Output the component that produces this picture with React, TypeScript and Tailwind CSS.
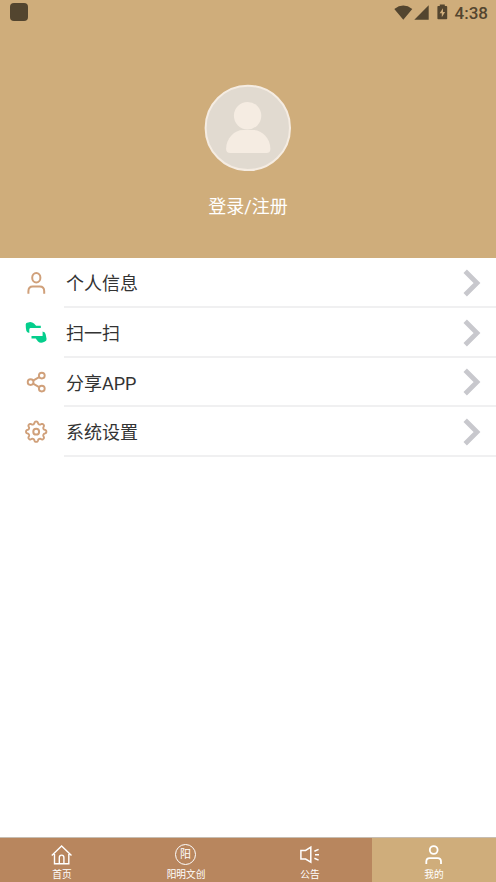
import React from "react";

const TAN = "#d0a07a";

function gearPath(cx: number, cy: number) {
  const pts: string[] = [];
  for (let i = 0; i < 160; i++) {
    const a = (i / 160) * Math.PI * 2;
    const r = 9.0 + 1.25 * Math.tanh(1.6 * Math.cos(8 * a));
    pts.push(`${(cx + r * Math.sin(a)).toFixed(2)} ${(cy - r * Math.cos(a)).toFixed(2)}`);
  }
  return `M${pts.join("L")}Z`;
}

function ProfileIcon() {
  return (
    <svg width="24" height="24" viewBox="0 0 24 24" fill="none" stroke={TAN} strokeWidth="2">
      <ellipse cx="12.3" cy="6.7" rx="4.1" ry="4.8" />
      <path d="M4.4 22.8v-2.6c0-3 1.8-4.6 4.4-4.6h7c2.6 0 4.4 1.6 4.4 4.6v2.6" />
    </svg>
  );
}

function ScanIcon() {
  return (
    <svg width="24" height="24" viewBox="0 0 24 24" fill="#04ce8c">
      <path d="M1.7 3.6Q1.7 1.4 4.2 1.4Q7.6.4 10 2.6L12.1 4.8H16.8V7.1H6.4Q5.3 7.3 5.3 8.6V12Q2.9 11.5 2.4 10Q1.7 7.5 1.7 3.6Z" />
      <path d="M18.6 10.4Q21.5 11 21.7 13.4L22.6 18Q22.7 20.2 20.5 20.7Q16.5 22.8 14 20.4L11.7 17.4H7.5V15.1H18.6Z" />
    </svg>
  );
}

function ShareIcon() {
  return (
    <svg width="24" height="24" viewBox="0 0 24 24" fill="none" stroke={TAN} strokeWidth="1.9">
      <circle cx="6.6" cy="12.1" r="2.9" />
      <circle cx="17.8" cy="5.6" r="2.9" />
      <circle cx="17.8" cy="18.6" r="2.9" />
      <path d="m9.1 10.6 6-3.5M9.1 13.7l6 3.4" />
    </svg>
  );
}

function GearIcon() {
  return (
    <svg width="24" height="24" viewBox="0 0 24 24" fill="none" stroke={TAN} strokeWidth="1.9" strokeLinejoin="round">
      <path d={gearPath(12.2, 11.7)} />
      <circle cx="12.2" cy="11.7" r="2.9" strokeWidth="2" />
    </svg>
  );
}

function HomeIcon() {
  return (
    <svg width="24" height="24" viewBox="0 0 24 24" fill="none" stroke="white" strokeWidth="1.4">
      <path d="M1.8 12.6 11.6 3 21.5 12.6M4.5 11v9.7h14.3V11M9.3 20.5v-6c0-3.2 4.6-3.2 4.6 0v6" />
    </svg>
  );
}

function CultureIcon() {
  return (
    <div className="-ml-px -mt-px flex h-[21px] w-[21px] items-center justify-center rounded-full border border-white text-[11px] leading-none">
      阳
    </div>
  );
}

function NoticeIcon() {
  return (
    <svg width="24" height="24" viewBox="0 0 24 24" fill="none" stroke="white" strokeWidth="1.5">
      <path d="M12.8 4.2v15L7.6 16.1H2.9V7.4h4.7zM16.4 8.3l4.2-1.9M17 11.8h4M16.4 15.2l4.2 1.9" />
    </svg>
  );
}

function MineIcon() {
  return (
    <svg width="24" height="24" viewBox="0 0 24 24" fill="none" stroke="white" strokeWidth="1.8">
      <circle cx="11.7" cy="7" r="3.9" />
      <path d="M4.3 21v-2.4c0-2.3 1.3-3.5 3.4-3.5h7.9c2.1 0 3.4 1.2 3.4 3.5V21" />
    </svg>
  );
}

function StatusBar() {
  return (
    <div className="flex h-[25px] items-center justify-between pl-[9.5px] pr-2 text-[#53452f]">
      <div className="mb-px h-[18px] w-[18px] rounded-[4px] bg-[#53452f]" />
      <div className="flex items-center">
        <svg className="mr-[7px]" width="54" height="18" viewBox="0 0 54 18" fill="currentColor">
          <path d="M0.3 5Q9.3-1.8 18.3 5L9.3 15.7ZM20.3 15.7 34.7 1.3V15.7Z" />
          <path fillRule="evenodd" d="M45.8 1.9V.4h5v1.5h1.6q.8 0 .8.8v11.7q0 .8-.8.8h-8.2q-.8 0-.8-.8V2.7q0-.8.8-.8ZM49 4.2 45.6 9.3h2.2v3.9l3.3-5.2H49Z" />
        </svg>
        <span className="pt-px text-[17px] leading-[24px] font-medium">4:38</span>
      </div>
    </div>
  );
}

const rows = [
  { label: "个人信息", Icon: ProfileIcon },
  { label: "扫一扫", Icon: ScanIcon },
  { label: "分享APP", Icon: ShareIcon },
  { label: "系统设置", Icon: GearIcon },
];

const tabs = [
  { label: "首页", Icon: HomeIcon, active: false },
  { label: "阳明文创", Icon: CultureIcon, active: false },
  { label: "公告", Icon: NoticeIcon, active: false },
  { label: "我的", Icon: MineIcon, active: true },
];

export default function App() {
  return (
    <div className="flex h-[882px] w-[496px] flex-col overflow-hidden bg-white font-[Roboto,'Noto_Sans_CJK_SC',sans-serif]">
      <header className="h-[258.4px] shrink-0 bg-[#cfad7b]">
        <StatusBar />
        <div className="flex flex-col items-center pt-[59px]">
          <svg className="mr-px" width="87" height="87" viewBox="0 0 87 87">
            <circle cx="43.8" cy="43.9" r="42.2" fill="#e1dad0" stroke="#f5ece2" strokeWidth="2" />
            <circle cx="43.6" cy="31.7" r="13.7" fill="#f5ece2" />
            <path d="M22.1 65C22.1 54 30.6 46 39.1 46h10C57.6 46 66.4 54 66.4 65Q66.4 69 62.4 69H26.1Q22.1 69 22.1 65Z" fill="#f5ece2" />
          </svg>
          <div className="mt-[22px] text-[18px] leading-7 text-white">登录/注册</div>
        </div>
      </header>

      <main className="flex-1">
        {rows.map(({ label, Icon }) => (
          <div key={label} className="flex h-[49.6px] items-center pl-6">
            <Icon />
            <div className="ml-4 flex h-full flex-1 items-center justify-between border-b-2 border-[#f0f0f1] pr-[15px] pl-[2px]">
              <span className="pt-[4.4px] text-[18px] leading-7 text-[#333]">{label}</span>
              <svg className="mt-[1.5px]" width="18" height="28" viewBox="0 0 18 28" fill="none" stroke="#c8c8cd" strokeWidth="4.8">
                <path d="M2.2 2.2 14 14 2.2 25.8" />
              </svg>
            </div>
          </div>
        ))}
      </main>

      <nav className="flex h-[45px] shrink-0 border-t border-[#c6bdb2] text-white">
        {tabs.map(({ label, Icon, active }) => (
          <div
            key={label}
            className={`flex flex-1 flex-col items-center pt-[5px] ${active ? "bg-[#cfad7b]" : "bg-[#b8865e]"}`}
          >
            <div className="flex h-6 shrink-0 items-center justify-center">
              <Icon />
            </div>
            <span className="text-[9.7px] leading-[16px]">{label}</span>
          </div>
        ))}
      </nav>
    </div>
  );
}
